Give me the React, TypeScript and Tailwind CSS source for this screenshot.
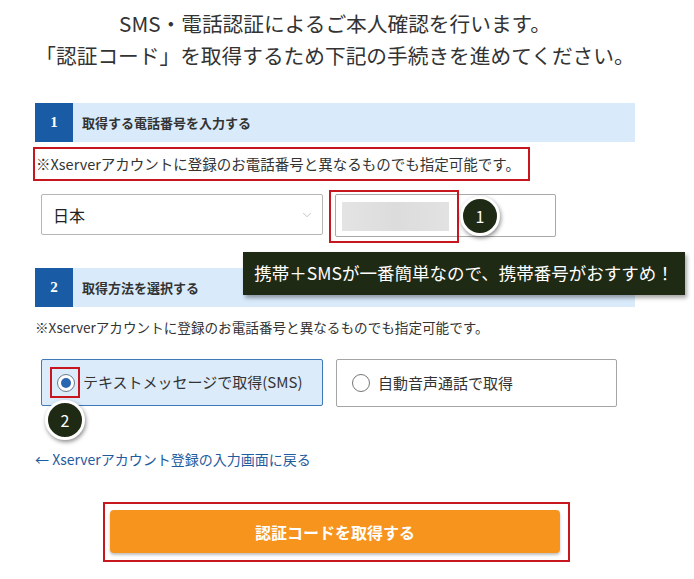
import React from 'react';
import { ChevronDown } from 'lucide-react';

const FONT = { fontFamily: '"Noto Sans CJK JP", "Noto Sans", sans-serif' };

// Numbered step header bar
const StepHeader = ({ num, title }: { num: string; title: string }) => (
  <div className="flex h-[39px] w-[600px] bg-[#d9ebfb]">
    <div className="flex w-[38px] items-center justify-center bg-[#1a5ba6] text-[15px] font-bold text-white" style={{ fontFamily: '"Liberation Serif", serif' }}>
      {num}
    </div>
    <div className="flex items-center pl-[9px] text-[13px] font-bold text-[#333]">{title}</div>
  </div>
);

// Dark green numbered callout circle
const Badge = ({ n, className }: { n: string; className: string }) => (
  <div className={`absolute flex h-[40px] w-[40px] items-center justify-center rounded-full border-[3px] border-white bg-[#1f2a15] text-[16px] text-white shadow-[1px_2px_4px_rgba(0,0,0,0.45)] ${className}`}>
    {n}
  </div>
);

const App = () => {
  return (
    <main className="min-h-screen bg-white text-[#333]" style={FONT}>
      <div className="relative ml-[35px] w-[600px] pt-[7px]">
        {/* Title */}
        <h1 className="text-center text-[20.7px] leading-[32px] text-[#333]">
          SMS・電話認証によるご本人確認を行います。
          <br />
          「認証コード」を取得するため下記の手続きを進めてください。
        </h1>

        {/* Step 1 */}
        <div className="mt-[32px]">
          <StepHeader num="1" title="取得する電話番号を入力する" />
          <div className="ml-[-2px] mt-[5px] inline-flex h-[34px] items-center border-2 border-[#c8161e] pl-[1px] pr-[8px] text-[14.5px] text-[#333]">
            ※Xserverアカウントに登録のお電話番号と異なるものでも指定可能です。
          </div>
          <div className="mt-[13px] flex items-start">
            <div className="ml-[6px] flex h-[41px] w-[282px] items-center justify-between rounded-[2px] border border-[#b5b5b5] pl-[11px] pr-[8px] text-[16px] text-[#222]">
              <span>日本</span>
              <ChevronDown size={14} strokeWidth={1.2} className="text-[#aaa]" />
            </div>
            <div className="relative ml-[12px] h-[43px] w-[221px] rounded-[2px] border border-[#a8a8a8]">
              <div className="ml-[6px] mt-[7px] h-[29px] w-[107px] bg-gradient-to-r from-[#e4e4e4] via-[#dcdcdc] to-[#e2e2e2] blur-[0.5px]" />
              <div className="absolute left-[-7px] top-[-5px] h-[53px] w-[130px] border-2 border-[#c8161e]" />
            </div>
          </div>
        </div>

        {/* Step 2 */}
        <div className="mt-[31px]">
          <StepHeader num="2" title="取得方法を選択する" />
          <p className="mt-[10px] text-[13.6px] leading-[20px] text-[#333]">
            ※Xserverアカウントに登録のお電話番号と異なるものでも指定可能です。
          </p>
          <div className="mt-[22px] flex gap-[13px] pl-[6px]">
            <div className="relative flex h-[47px] w-[282px] items-center rounded-[2px] border border-[#3f79b8] bg-[#dcebfa] pl-[15px] text-[15px] text-[#333]">
              <span className="flex h-[18px] w-[18px] items-center justify-center rounded-full border-[1.5px] border-[#6b7a8c] bg-white">
                <span className="h-[10px] w-[10px] rounded-full bg-[#2a67b3]" />
              </span>
              <span className="ml-[8px]">テキストメッセージで取得(SMS)</span>
              <div className="absolute left-[8px] top-[7px] h-[31px] w-[30px] border-2 border-[#c8161e]" />
            </div>
            <div className="flex h-[48px] w-[281px] items-center rounded-[2px] border border-[#a5a5a5] bg-white pl-[15px] text-[15px] text-[#333]">
              <span className="h-[18px] w-[18px] rounded-full border-[1.5px] border-[#777] bg-white" />
              <span className="ml-[8px]">自動音声通話で取得</span>
            </div>
          </div>
        </div>

        <a className="mt-[42px] block text-[14px] leading-[20px] text-[#1f5c9e]">
          ← Xserverアカウント登録の入力画面に戻る
        </a>

        {/* Submit */}
        <div className="ml-[68px] mt-[33px] w-[467px] border-2 border-[#c8161e] px-[5px] pb-[7px] pt-[6px]">
          <div className="flex h-[43px] w-[450px] items-center justify-center rounded-[4px] bg-[#f7941e] text-[16px] font-bold text-white shadow-[0_2px_3px_rgba(0,0,0,0.25)]">
            認証コードを取得する
          </div>
        </div>

        {/* Overlays */}
        <Badge n="1" className="left-[425px] top-[196px]" />
        <div className="absolute left-[208px] top-[252px] flex h-[43px] w-[442px] items-center justify-center bg-[#1f2a15] text-[17.5px] text-white shadow-[2px_3px_4px_rgba(0,0,0,0.35)]">
          携帯＋SMSが一番簡単なので、携帯番号がおすすめ！
        </div>
        <Badge n="2" className="left-[10px] top-[400px]" />
      </div>
    </main>
  );
};

export default App;
